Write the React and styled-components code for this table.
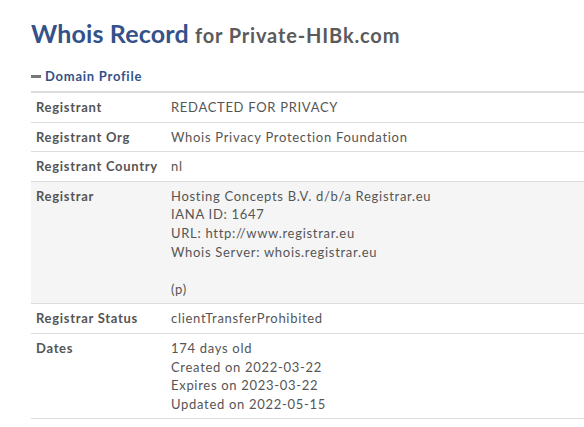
import React from "react";
import styled, { createGlobalStyle } from "styled-components";

const GlobalStyle = createGlobalStyle`
  html, body {
    margin: 0;
    padding: 0;
    background: #fff;
    overflow: hidden;
  }
  body {
    font-family: Lato, "Open Sans", sans-serif;
    color: #555;
  }
`;

const Page = styled.div`
  width: 640px;
  padding: 17px 0 0 31px;
`;

const Title = styled.h1`
  margin: 0;
  font-size: 25px;
  font-weight: 700;
  color: #34518a;
  line-height: 32px;
  letter-spacing: 0.15px;

  small {
    font-size: 20px;
    color: #5b5b5b;
    font-weight: 700;
    letter-spacing: 0.85px;
  }
`;

const SectionHeader = styled.h3`
  display: flex;
  align-items: center;
  margin: 17px 0 7px;
  font-size: 13px;
  font-weight: 700;
  color: #34518a;
  line-height: 16px;
  letter-spacing: 0.75px;
`;

const Minus = styled.span`
  display: inline-block;
  width: 10px;
  height: 3px;
  background: #777;
  margin: 1px 4px 0 0;
`;

const Table = styled.table`
  width: 100%;
  border-collapse: collapse;
  border-top: 2px solid #ddd;
  font-size: 13px;
  line-height: 18.6px;
  letter-spacing: 0.7px;
`;

const Row = styled.tr`
  background: ${({ $shaded }) => ($shaded ? "#f5f5f5" : "#fff")};
  border-bottom: 1px solid #ddd;
`;

const Label = styled.th`
  width: 125px;
  padding: 5px 5px;
  text-align: left;
  vertical-align: top;
  font-weight: 700;
  color: #555;
  white-space: nowrap;
`;

const Value = styled.td`
  padding: 5px 5px;
  vertical-align: top;
  color: #555;
  white-space: pre-line;
`;

const rows = [
  ["Registrant", "REDACTED FOR PRIVACY"],
  ["Registrant Org", "Whois Privacy Protection Foundation"],
  ["Registrant Country", "nl"],
  [
    "Registrar",
    "Hosting Concepts B.V. d/b/a Registrar.eu\nIANA ID: 1647\nURL: http://www.registrar.eu\nWhois Server: whois.registrar.eu\n\u00a0\n(p)",
    true,
  ],
  ["Registrar Status", "clientTransferProhibited"],
  [
    "Dates",
    "174 days old\nCreated on 2022-03-22\nExpires on 2023-03-22\nUpdated on 2022-05-15",
  ],
];

const App = () => (
  <Page>
    <GlobalStyle />
    <Title>
      Whois Record <small>for Private-HIBk.com</small>
    </Title>
    <SectionHeader>
      <Minus />
      Domain Profile
    </SectionHeader>
    <Table>
      <tbody>
        {rows.map(([label, value, shaded]) => (
          <Row key={label} $shaded={shaded}>
            <Label>{label}</Label>
            <Value>{value}</Value>
          </Row>
        ))}
      </tbody>
    </Table>
  </Page>
);

export default App;
